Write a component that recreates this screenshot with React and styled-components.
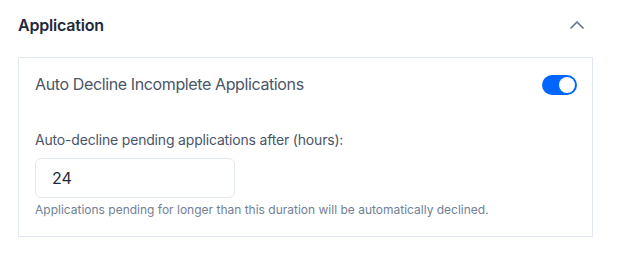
import React, { useState } from 'react';
import styled, { createGlobalStyle } from 'styled-components';
import { ChevronUp } from 'lucide-react';

const GlobalStyle = createGlobalStyle`
  body {
    margin: 0;
    background: #ffffff;
    font-family: Inter, "Noto Sans", sans-serif;
    -webkit-font-smoothing: antialiased;
  }
`;

const Section = styled.section`
  width: 575px;
  padding: 13px 0 0 18px;
`;

const Header = styled.div`
  display: flex;
  align-items: center;
  justify-content: space-between;
  height: 24px;
  padding-right: 4px;
  margin-bottom: 20px;
`;

const Title = styled.h3`
  margin: 0;
  font-size: 16px;
  line-height: 24px;
  font-weight: 600;
  letter-spacing: -0.2px;
  color: #1e293b;
`;

const CollapseButton = styled.button`
  display: flex;
  align-items: center;
  justify-content: center;
  padding: 0;
  border: none;
  background: none;
  color: #64748b;
  cursor: pointer;
`;

const Card = styled.div`
  border: 1px solid #e2e8f0;
  padding: 14px 15px 18px 16px;
`;

const ToggleRow = styled.div`
  display: flex;
  align-items: center;
  justify-content: space-between;
  height: 24px;
  margin-bottom: 34px;
`;

const ToggleLabel = styled.span`
  font-size: 16px;
  line-height: 24px;
  letter-spacing: -0.38px;
  color: #4a5568;
`;

const Switch = styled.button`
  position: relative;
  width: 35px;
  height: 20px;
  padding: 0;
  border: none;
  border-radius: 10px;
  background: ${(p) => (p.$on ? '#0066ff' : '#cbd5e1')};
  cursor: pointer;
  margin-top: 2px;
`;

const Knob = styled.span`
  position: absolute;
  top: 2px;
  left: ${(p) => (p.$on ? '17px' : '2px')};
  width: 16px;
  height: 16px;
  border-radius: 50%;
  background: #ffffff;
  transition: left 0.15s;
`;

const FieldLabel = styled.label`
  display: block;
  font-size: 14px;
  line-height: 20px;
  letter-spacing: -0.18px;
  color: #4a5568;
  margin-bottom: 8px;
`;

const Input = styled.input`
  box-sizing: border-box;
  display: block;
  width: 200px;
  height: 40px;
  padding: 0 16px;
  border: 1px solid #e2e8f0;
  border-radius: 6px;
  font-family: inherit;
  font-size: 16px;
  color: #1e293b;
  outline: none;
`;

const Hint = styled.p`
  margin: 4px 0 0;
  font-size: 12px;
  line-height: 16px;
  color: #718096;
`;

const App = () => {
  const [enabled, setEnabled] = useState(true);
  const [hours, setHours] = useState('24');

  return (
    <>
      <GlobalStyle />
      <Section>
        <Header>
          <Title>Application</Title>
          <CollapseButton aria-label="Collapse">
            <ChevronUp size={24} strokeWidth={1.75} />
          </CollapseButton>
        </Header>
        <Card>
          <ToggleRow>
            <ToggleLabel>Auto Decline Incomplete Applications</ToggleLabel>
            <Switch $on={enabled} onClick={() => setEnabled(!enabled)}>
              <Knob $on={enabled} />
            </Switch>
          </ToggleRow>
          <FieldLabel htmlFor="hours">Auto-decline pending applications after (hours):</FieldLabel>
          <Input id="hours" value={hours} onChange={(e) => setHours(e.target.value)} />
          <Hint>Applications pending for longer than this duration will be automatically declined.</Hint>
        </Card>
      </Section>
    </>
  );
};

export default App;
